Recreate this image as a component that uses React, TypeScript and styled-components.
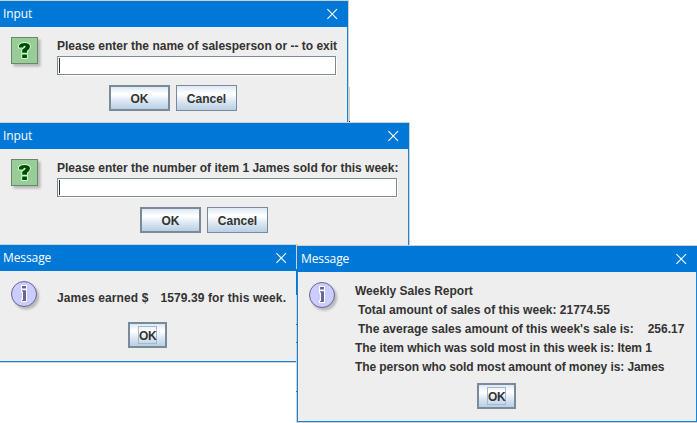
import React from "react";
import styled, { createGlobalStyle, css } from "styled-components";

const Global = createGlobalStyle`
  html, body { margin: 0; background: #fff; overflow: hidden; }
  * { box-sizing: border-box; }
`;

const Desktop = styled.main`
  position: relative;
  width: 697px;
  height: 423px;
  overflow: hidden;
  background: #fff;
  font: bold 12px/19px "Liberation Sans", Arial, sans-serif;
  color: #333;
`;

const Window = styled.section<{ $x: number; $y: number; $w: number; $h: number; $edge?: boolean }>`
  position: absolute;
  left: ${(p) => p.$x}px;
  top: ${(p) => p.$y}px;
  width: ${(p) => p.$w}px;
  height: ${(p) => p.$h}px;
  display: flex;
  flex-direction: column;
  background: #eee;
  border: solid #1883d7;
  border-width: 0 1px 1px ${(p) => (p.$edge ? 1 : 0)}px;
  box-shadow: 0 0 0 1px #d0d0d0;
`;

/* Sliver of a window behind the dialogs that stays visible between them. */
const Sliver = styled.span<{ $x: number; $y: number; $h: number; $color: string }>`
  position: absolute;
  left: ${(p) => p.$x}px;
  top: ${(p) => p.$y}px;
  width: 1px;
  height: ${(p) => p.$h}px;
  background: ${(p) => p.$color};
`;

const TitleBar = styled.header`
  flex: none;
  height: 26px;
  margin: 0 -1px;
  padding: 0 10px 0 4px;
  display: flex;
  align-items: center;
  justify-content: space-between;
  background: #0078d7;
  color: #fff;
  font: 400 12px/26px "Open Sans", "Noto Sans", sans-serif;
`;

const Title = styled.span`
  letter-spacing: -0.1px;
`;

const Body = styled.div`
  display: grid;
  grid-template-columns: 46px 1fr;
  padding: 10px 0 0 11px;
`;

const Content = styled.div<{ $top: number }>`
  padding-top: ${(p) => p.$top}px;
`;

const Line = styled.p<{ $track?: number; $indent?: number }>`
  margin: 0;
  padding-left: ${(p) => p.$indent ?? 0}px;
  height: 19px;
  white-space: pre;
  letter-spacing: ${(p) => p.$track ?? 0}px;
`;

const Amount = styled.span<{ $gap: number }>`
  margin-left: ${(p) => p.$gap}px;
`;

const Field = styled.div<{ $w: number }>`
  width: ${(p) => p.$w}px;
  height: 19px;
  padding: 1px;
  background: #fff;
  border: 1px solid #7a8a99;
  box-shadow: 1px 1px 0 #fff;
`;

const Caret = styled.span`
  display: block;
  width: 1px;
  height: 15px;
  background: #333;
`;

const Actions = styled.div<{ $left: number; $top: number }>`
  display: flex;
  gap: 6px;
  padding: ${(p) => p.$top}px 0 0 ${(p) => p.$left}px;
`;

const Button = styled.button<{ $primary?: boolean; $small?: boolean }>`
  width: ${(p) => (p.$small ? 39 : 61)}px;
  height: 26px;
  padding: 0;
  display: flex;
  align-items: center;
  justify-content: center;
  border: ${(p) => (p.$primary ? 2 : 1)}px solid #7a8a99;
  border-radius: 0;
  background: linear-gradient(#dde8f3 0%, #fff 30%, #fff 34%, #dde8f3 62%, #b8cfe5 100%);
  color: #333;
  font: bold 12px/18px "Liberation Sans", Arial, sans-serif;
`;

const Caption = styled.span<{ $focus?: boolean }>`
  padding-top: 1px;
  ${(p) =>
    p.$focus &&
    css`
      width: 19px;
      height: 18px;
      line-height: 18px;
      padding: 0;
      letter-spacing: -0.4px;
      border: 1px solid #a3b8cc;
    `}
`;

const Icon = styled.svg`
  display: block;
  overflow: visible;
`;

const Shade = styled.g`
  filter: blur(1.2px);
  opacity: 0.45;
  fill: #777;
`;

const Close = () => (
  <Icon width="11" height="12" viewBox="0 0 11 12">
    <path d="M.4 1.2l9.6 9.6M10 1.2L.4 10.8" stroke="#fff" strokeWidth="1.1" fill="none" />
  </Icon>
);

const MARK =
  "M8 10.5V8.2Q9.6 6 13.6 6Q19 6 19 9.6Q19 11.8 16 13.8V15.8H11.2V13.4Q11.2 12.2 13.2 11.2Q14.6 10.4 14.6 9.5Q14.6 8.8 13.5 8.8Q12.2 8.8 12.2 10.5ZM11.2 17.5H15.9V21H11.2Z";

const QuestionIcon = () => (
  <Icon width="27" height="27" viewBox="0 0 27 27">
    <Shade><rect x="2.5" y="2.5" width="27" height="27" /></Shade>
    <rect x=".5" y=".5" width="26" height="26" fill="#99cc99" stroke="#668866" />
    <path d={MARK} fill="#004d00" stroke="#ccffcc" strokeWidth="1.8" paintOrder="stroke" strokeLinejoin="round" />
  </Icon>
);

const InfoIcon = () => (
  <Icon width="26" height="26" viewBox="0 0 26 26">
    <Shade><circle cx="15.2" cy="15.6" r="13" /></Shade>
    <circle cx="13" cy="13" r="12.5" fill="#ccccff" stroke="#666699" strokeWidth="1" />
    <path d="M11 5h4v2.4h-4zM11 9.2h4V20h-4v-1h1v-8.6h-1z" fill="#666699" stroke="#fff" strokeWidth="2" paintOrder="stroke" />
  </Icon>
);

const Bar = ({ text }: { text: string }) => (
  <TitleBar>
    <Title>{text}</Title>
    <Close />
  </TitleBar>
);

type PromptProps = { y: number; w: number; h: number; label: string; field: number; left: number };

const Prompt = ({ y, w, h, label, field, left }: PromptProps) => (
  <Window $x={0} $y={y} $w={w} $h={h}>
    <Bar text="Input" />
    <Body>
      <QuestionIcon />
      <Content $top={0}>
        <Line>{label}</Line>
        <Field $w={field}><Caret /></Field>
      </Content>
    </Body>
    <Actions $left={left} $top={10}>
      <Button $primary><Caption>OK</Caption></Button>
      <Button><Caption>Cancel</Caption></Button>
    </Actions>
  </Window>
);

export default function App() {
  return (
    <>
      <Global />
      <Desktop>
        <Prompt y={1} w={348} h={123} label="Please enter the name of salesperson or -- to exit" field={279} left={109} />
        <Sliver $x={349} $y={87} $h={35} $color="#d0d0d0" />
        <Sliver $x={349} $y={121} $h={1} $color="#222" />
        <Prompt y={123} w={409} h={123} label="Please enter the number of item 1 James sold for this week:" field={340} left={140} />
        <Window $x={0} $y={245} $w={297} $h={117}>
          <Bar text="Message" />
          <Body>
            <InfoIcon />
            <Content $top={8}>
              <Line $track={0.1}>James earned $<Amount $gap={12}>1579.39 for this week.</Amount></Line>
            </Content>
          </Body>
          <Actions $left={128} $top={14}>
            <Button $primary $small><Caption $focus>OK</Caption></Button>
          </Actions>
        </Window>
        <Window $x={297} $y={246} $w={400} $h={176} $edge>
          <Bar text="Message" />
          <Body>
            <InfoIcon />
            <Content $top={0}>
              <Line>Weekly Sales Report</Line>
              <Line $indent={3}>Total amount of sales of this week: 21774.55</Line>
              <Line $indent={3}>The average sales amount of this week's sale is:<Amount $gap={14}>256.17</Amount></Line>
              <Line $track={-0.05}>The item which was sold most in this week is: Item 1</Line>
              <Line $track={-0.08}>The person who sold most amount of money is: James</Line>
            </Content>
          </Body>
          <Actions $left={179} $top={6}>
            <Button $primary $small><Caption $focus>OK</Caption></Button>
          </Actions>
        </Window>
        <Sliver $x={296} $y={269} $h={26} $color="#0078d7" />
        <Sliver $x={296} $y={324} $h={1} $color="#567" />
        <Sliver $x={296} $y={342} $h={1} $color="#567" />
        <Sliver $x={296} $y={391} $h={1} $color="#567" />
      </Desktop>
    </>
  );
}
